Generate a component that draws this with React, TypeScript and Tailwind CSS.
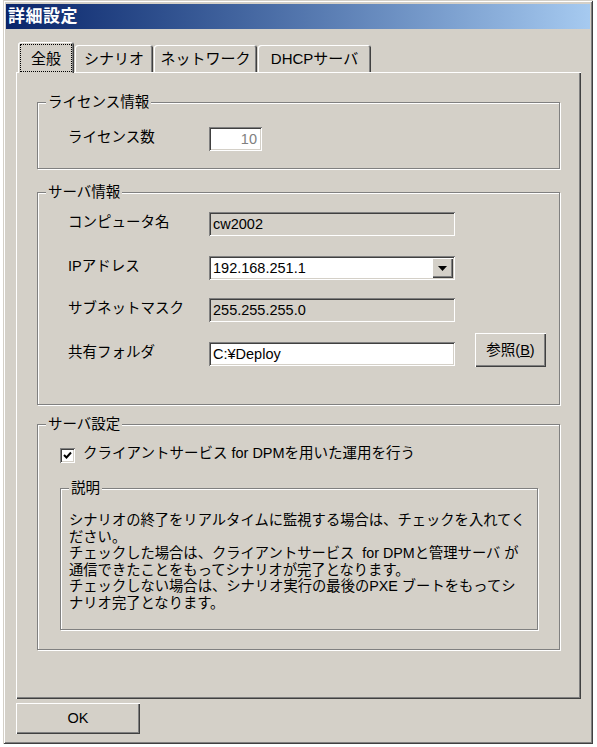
import React from 'react';

const sunken =
  'shadow-[inset_1px_1px_0_#808080,inset_-1px_-1px_0_#ffffff,inset_2px_2px_0_#404040,inset_-2px_-2px_0_#d4d0c8]';
const raised =
  'shadow-[inset_1px_1px_0_#ffffff,inset_-1px_-1px_0_#404040,inset_-2px_-2px_0_#808080]';
const etched = 'border border-[#808080] shadow-[1px_1px_0_#ffffff,inset_1px_1px_0_#ffffff]';

const GroupLabel = ({ children, ml = 'ml-[8px]' }: { children: React.ReactNode; ml?: string }) => (
  <div className={`-mt-[9px] ${ml} w-fit px-[2px] bg-[#d4d0c8] leading-[17px]`}>{children}</div>
);

const Field = ({ value, disabled }: { value: string; disabled?: boolean }) => (
  <div
    className={`w-[246px] h-[24px] flex items-center pl-[4px] ${sunken} ${
      disabled ? 'bg-[#d4d0c8]' : 'bg-white'
    }`}
  >
    {value}
  </div>
);

const Row = ({ label, children, className = '' }: { label: string; children: React.ReactNode; className?: string }) => (
  <div className={`flex items-center h-[24px] pl-[30px] ${className}`}>
    <div className="w-[141px] -mt-[3px]">{label}</div>
    {children}
  </div>
);

const tabs = [
  { label: 'シナリオ', w: 'w-[78px]' },
  { label: 'ネットワーク', w: 'w-[103px]' },
  { label: 'DHCPサーバ', w: 'w-[113px]' },
];

export default function App() {
  return (
    <div className="w-[597px] h-[747px] bg-white font-['Liberation_Sans','Noto_Sans_CJK_JP',sans-serif] text-[14.5px] leading-[17px] text-black">
      <div className="ml-[3px] w-[590px] h-[744px] bg-[#d4d0c8] pt-[4px] px-[3px] shadow-[inset_1px_1px_0_#d4d0c8,inset_-1px_-1px_0_#404040,inset_2px_2px_0_#ffffff,inset_-2px_-2px_0_#808080]">
        {/* title bar */}
        <div className="h-[25px] bg-linear-to-r from-[#0a246a] to-[#a6caf0] flex items-center pl-[2px]">
          <span className="text-white font-bold text-[17px] tracking-[0.5px]">詳細設定</span>
        </div>

        {/* tabs */}
        <div className="flex items-end mt-[13px] ml-[12px] gap-[1px] h-[30px]">
          <div
            className={`relative z-10 w-[56px] h-[31px] -mb-[1px] bg-[#d4d0c8] rounded-t-[3px] flex shadow-[inset_1px_1px_0_#ffffff,inset_-1px_0_0_#404040,inset_-2px_0_0_#808080] text-[15px]`}
          >
            <div className="flex-1 mx-[2px] mt-[2px] mb-[1px] border border-dotted border-black flex items-center justify-center">
              全般
            </div>
          </div>
          {tabs.map(t => (
            <div
              key={t.label}
              className={`${t.w} h-[27px] rounded-t-[3px] flex items-center justify-center text-[15px] shadow-[inset_1px_1px_0_#ffffff,inset_-1px_0_0_#404040,inset_-2px_0_0_#808080]`}
            >
              {t.label}
            </div>
          ))}
        </div>

        {/* panel */}
        <div className={`ml-[10px] w-[565px] h-[627px] pt-[30px] px-[21px] ${raised}`}>
          {/* ライセンス情報 */}
          <div className={`${etched} pb-[17px]`}>
            <GroupLabel>ライセンス情報</GroupLabel>
            <Row label="ライセンス数" className="mt-[16px]">
              <div className={`w-[53px] h-[24px] bg-white flex items-center justify-end pr-[5px] text-[#808080] ${sunken}`}>
                10
              </div>
            </Row>
          </div>

          {/* サーバ情報 */}
          <div className={`${etched} mt-[23px] pb-[38px]`}>
            <GroupLabel>サーバ情報</GroupLabel>
            <Row label="コンピュータ名" className="mt-[11px]">
              <Field value="cw2002" disabled />
            </Row>
            <Row label="IPアドレス" className="mt-[20px]">
              <div className={`w-[246px] h-[24px] bg-white flex items-stretch p-[2px] ${sunken}`}>
                <div className="flex-1 flex items-center pl-[2px]">192.168.251.1</div>
                <div className={`w-[21px] bg-[#d4d0c8] flex items-center justify-center ${raised}`}>
                  <svg width="9" height="5" viewBox="0 0 9 5">
                    <polygon points="0,0 9,0 4.5,5" fill="#000" />
                  </svg>
                </div>
              </div>
            </Row>
            <Row label="サブネットマスク" className="mt-[18px]">
              <Field value="255.255.255.0" disabled />
            </Row>
            <Row label="共有フォルダ" className="mt-[20px]">
              <Field value="C:¥Deploy" />
              <button
                className={`ml-[20px] w-[71px] h-[34px] self-end -mb-[1px] bg-[#d4d0c8] flex items-center justify-center ${raised}`}
              >
                参照(<span className="underline">B</span>)
              </button>
            </Row>
          </div>

          {/* サーバ設定 */}
          <div className={`${etched} mt-[19px] pb-[19px]`}>
            <GroupLabel>サーバ設定</GroupLabel>
            <div className="flex items-center mt-[14px] pl-[22px] h-[16px]">
              <div className={`w-[15px] h-[15px] bg-white flex items-center justify-center ${sunken}`}>
                <svg width="9" height="9" viewBox="0 0 9 9">
                  <polyline points="1,4 3.5,6.5 8,1.5" fill="none" stroke="#000" strokeWidth="2" />
                </svg>
              </div>
              <span className="ml-[8px] -mt-[3px]">クライアントサービス for DPMを用いた運用を行う</span>
            </div>

            {/* 説明 */}
            <div className={`${etched} mt-[25px] ml-[22px] w-[478px] pb-[18px]`}>
              <GroupLabel>説明</GroupLabel>
              <div className="mt-[15px] pl-[8px] leading-[16.5px] text-[14.3px] whitespace-nowrap">
                シナリオの終了をリアルタイムに監視する場合は、チェックを入れてく
                <br />
                ださい。
                <br />
                チェックした場合は、クライアントサービス&nbsp; for DPMと管理サーバ が
                <br />
                通信できたことをもってシナリオが完了となります。
                <br />
                チェックしない場合は、シナリオ実行の最後のPXE ブートをもってシ
                <br />
                ナリオ完了となります。
              </div>
            </div>
          </div>
        </div>

        {/* OK */}
        <button
          className={`mt-[4px] ml-[10px] w-[124px] h-[31px] bg-[#d4d0c8] flex items-center justify-center ${raised}`}
        >
          OK
        </button>
      </div>
    </div>
  );
}
